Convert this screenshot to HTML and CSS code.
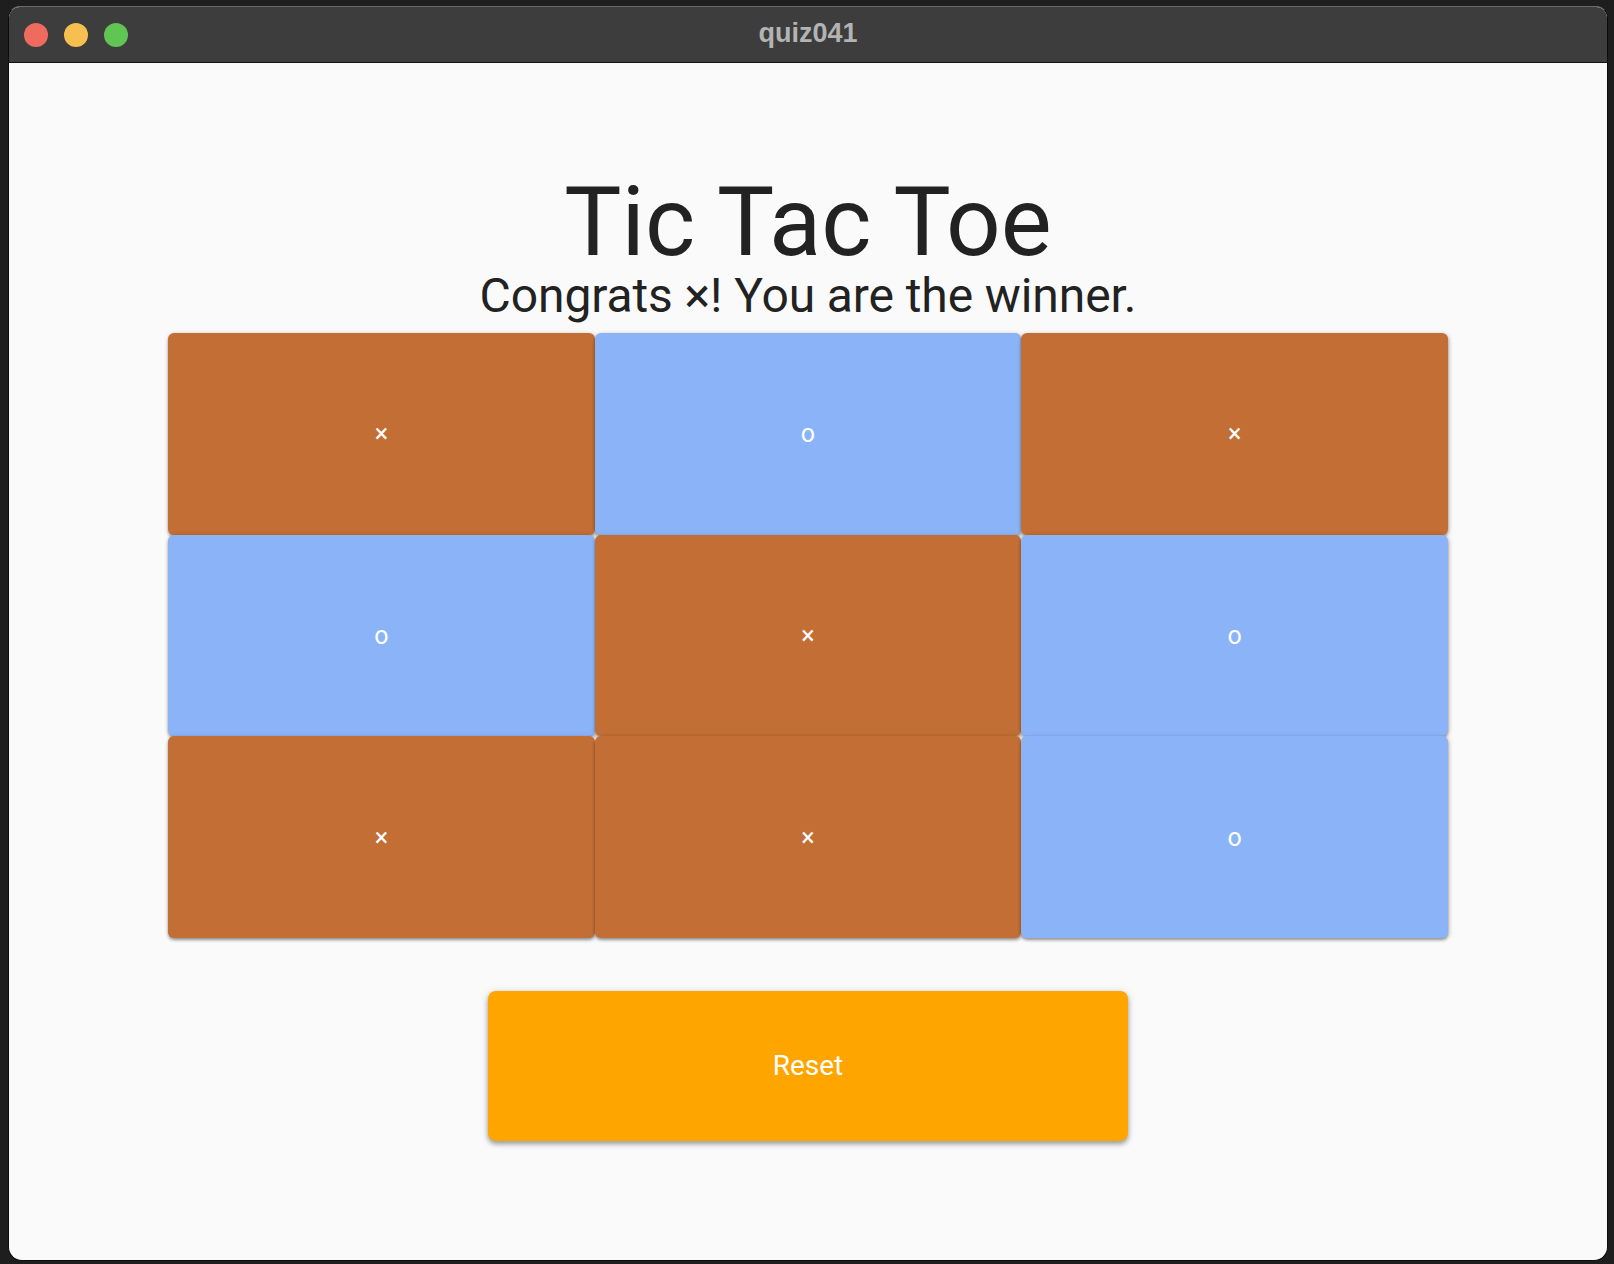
FILE: index.html
```html
<!DOCTYPE html>
<html lang="en">
<head>
<meta charset="utf-8">
<title>quiz041</title>
<link rel="stylesheet" href="styles.css">
</head>
<body>
  <div class="window">
    <div class="titlebar">
      <div class="lights">
        <span class="light red"></span>
        <span class="light yellow"></span>
        <span class="light green"></span>
      </div>
      <div class="wtitle">quiz041</div>
      <div></div>
    </div>
    <main class="app">
      <h1 class="title">Tic Tac Toe</h1>
      <p class="status">Congrats ×! You are the winner.</p>
      <div class="board">
        <div class="cell x">×</div>
        <div class="cell o">o</div>
        <div class="cell x">×</div>
        <div class="cell o">o</div>
        <div class="cell x">×</div>
        <div class="cell o">o</div>
        <div class="cell x">×</div>
        <div class="cell x">×</div>
        <div class="cell o">o</div>
      </div>
      <button class="reset">Reset</button>
    </main>
  </div>
</body>
</html>
```

FILE: styles.css
```css
html, body {
  margin: 0;
  padding: 0;
}
body {
  background: #1e1e1e;
  width: 1614px;
  height: 1264px;
  overflow: hidden;
  padding: 6px 6px 3px 8px;
  box-sizing: border-box;
  font-family: Roboto, "Liberation Sans", sans-serif;
}
.window {
  width: 1600px;
  height: 1255px;
  box-sizing: border-box;
  border: 1px solid #0c0c0c;
  border-top-color: #6a6a6a;
  border-radius: 12px 12px 14px 14px;
  overflow: hidden;
  background: #fafafa;
  display: flex;
  flex-direction: column;
}
.titlebar {
  height: 55px;
  flex: none;
  background: #3d3d3d;
  border-bottom: 1px solid #111;
  display: grid;
  grid-template-columns: 1fr auto 1fr;
  align-items: center;
}
.lights {
  display: flex;
  gap: 16px;
  padding-left: 15px;
}
.light {
  width: 24px;
  height: 24px;
  border-radius: 50%;
  display: block;
}
.red { background: #ef6b5f; }
.yellow { background: #f6bf4f; }
.green { background: #61c554; }
.wtitle {
  color: #b3b3b3;
  font-family: "Liberation Sans", Arial, sans-serif;
  font-weight: bold;
  font-size: 27px;
  line-height: 30px;
  margin-top: -4px;
}
.app {
  flex: 1;
  display: flex;
  flex-direction: column;
  align-items: center;
  padding-top: 111px;
  color: #222;
}
.title {
  margin: 0;
  font-size: 96px;
  line-height: 96px;
  font-weight: 400;
  letter-spacing: 0;
}
.status {
  margin: 2px 0 0;
  font-size: 48px;
  line-height: 48px;
  font-weight: 400;
  letter-spacing: -0.1px;
}
.board {
  margin-top: 13px;
  width: 1280px;
  display: grid;
  grid-template-columns: repeat(3, 1fr);
  grid-template-rows: repeat(3, 201.67px);
}
.cell {
  display: flex;
  align-items: center;
  justify-content: center;
  border-radius: 6px;
  color: #fff;
  font-size: 25px;
  box-shadow: 0 2px 3px rgba(0, 0, 0, 0.32), 1px 1px 5px rgba(0, 0, 0, 0.2);
}
.cell.x { background: #c36e34; }
.cell.o { background: #8bb4f8; }
.reset {
  margin-top: 53px;
  width: 640px;
  height: 150px;
  border: none;
  border-radius: 8px;
  background: #ffa500;
  color: #fff;
  font-family: Roboto, "Liberation Sans", sans-serif;
  font-size: 28px;
  font-weight: 400;
  box-shadow: 0 3px 5px rgba(0, 0, 0, 0.32), 0 1px 8px rgba(0, 0, 0, 0.14);
}
```
